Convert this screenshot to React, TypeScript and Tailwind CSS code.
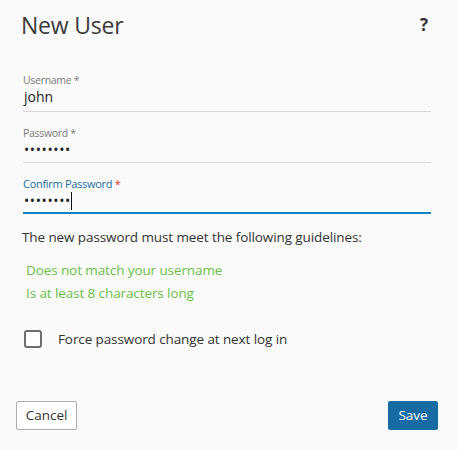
import React from "react";

export default function App() {
  const font = { fontFamily: '"Open Sans", "Noto Sans", sans-serif' };
  return (
    <div className="w-[457px] h-[450px] bg-[#fafafa] text-[#333] flex flex-col" style={font}>
      <div className="flex items-start justify-between pl-[21px] pr-[29px] pt-[9px]">
        <h1 className="text-[23px] leading-[32px] text-[#3b3b3b] tracking-[-0.2px]">New User</h1>
        <span className="text-[17px] font-bold leading-[26px] text-[#333] mt-[3px]">?</span>
      </div>

      <div className="flex flex-col pl-[23px] pr-[26px] mt-[32px]">
        <div className="flex flex-col border-b border-[#d9d9d9] h-[39px]">
          <span className="text-[10.5px] leading-[14px] text-[#7a7a7a] tracking-[-0.3px]">Username *</span>
          <span className="text-[14px] leading-[20px] text-[#222] pl-[1px]">john</span>
        </div>
        <div className="flex flex-col border-b border-[#d9d9d9] h-[51px] pt-[14px]">
          <span className="text-[10.5px] leading-[14px] text-[#7a7a7a] tracking-[-0.3px]">Password *</span>
          <span className="text-[14px] leading-[20px] text-[#222] pl-[1px] tracking-[0.6px]">••••••••</span>
        </div>
        <div className="flex flex-col border-b-2 border-[#1283c4] h-[51px] pt-[14px]">
          <span className="text-[11px] leading-[14px] text-[#1b6fa3] tracking-[-0.3px]">
            Confirm Password <span className="text-[#e0322b]">*</span>
          </span>
          <span className="text-[14px] leading-[20px] text-[#222] pl-[1px] tracking-[0.6px] flex items-center">
            ••••••••<span className="inline-block w-[1px] h-[18px] bg-[#111] ml-[0px]" />
          </span>
        </div>
      </div>

      <p className="pl-[22px] mt-[13px] text-[13.5px] leading-[20px] text-[#333] tracking-[-0.1px]">
        The new password must meet the following guidelines:
      </p>
      <div className="flex flex-col pl-[26px] mt-[12px] text-[13.5px] leading-[23px] text-[#6cc04a] tracking-[-0.1px]">
        <span>Does not match your username</span>
        <span>Is at least 8 characters long</span>
      </div>

      <label className="flex items-center pl-[24px] mt-[24px] gap-[16px]">
        <span className="w-[18px] h-[18px] border-2 border-[#6e6e6e] rounded-[3px] bg-white" />
        <span className="text-[13.5px] leading-[20px] text-[#333] tracking-[-0.1px]">
          Force password change at next log in
        </span>
      </label>

      <div className="flex justify-between items-center pl-[16px] pr-[19px] mt-auto mb-[20px]">
        <button className="w-[61px] h-[29px] border border-[#adadad] rounded-[2px] bg-white text-[13.5px] text-[#333]">
          Cancel
        </button>
        <button className="w-[50px] h-[29px] rounded-[2px] bg-[#166ba2] text-[13.5px] text-white">
          Save
        </button>
      </div>
    </div>
  );
}
